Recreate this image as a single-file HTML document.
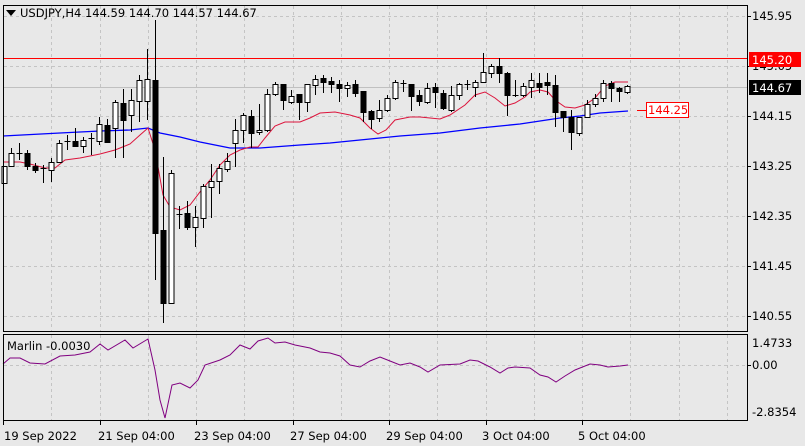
<!DOCTYPE html>
<html><head><meta charset="utf-8"><style>
html,body{margin:0;padding:0;background:#e8e8e8;width:805px;height:446px;overflow:hidden}
svg{display:block;font-family:"DejaVu Sans","Liberation Sans",sans-serif}
</style></head><body>
<svg id="s" width="805" height="446" xmlns="http://www.w3.org/2000/svg" font-size="11.5">
<rect width="805" height="446" fill="#e8e8e8"/>
<g id="grid" stroke="#c4c4c4" stroke-dasharray="3,3" stroke-width="1"></g>
<line x1="3" y1="87.5" x2="748" y2="87.5" stroke="#c0c0c0"/>
<line x1="3" y1="58.5" x2="748" y2="58.5" stroke="#ff0000"/>
<polyline fill="none" stroke="#0000ff" stroke-width="1.3" points="3,136 60,133 100,131 130,130 148,128 160,133 180,137 200,142 220,146 230,148 260,148 300,145 330,143 360,140 380,138 400,136 440,133 480,128 520,124 560,118 580,116 600,113 628,111"/>
<polyline fill="none" stroke="#dc143c" stroke-width="1" points="3,162 20,162 30,164 45,168 55,168 65,160 80,158 100,154 115,150 130,144 140,135 148,128 155,150 163,195 170,207 180,210 190,205 200,192 210,180 220,165 230,155 240,150 250,147 258,147 265,138 275,126 285,122 300,122 310,118 320,113 335,112 350,115 360,118 370,128 378,134 386,130 395,120 410,117 420,117 440,119 450,115 465,105 475,95 485,92 495,98 505,106 515,103 525,97 530,92 540,90 548,92 555,100 565,107 575,108 585,105 595,98 605,86 615,82 628,82"/>
<g id="c"></g>
<polyline fill="none" stroke="#800080" stroke-width="1" points="3,364 10,358 20,358 30,363 45,364 60,356 75,355 90,352 100,344 108,350 125,340 133,348 148,339 155,370 160,400 165,418 172,385 180,383 190,388 198,380 205,365 220,360 230,355 240,345 250,349 258,341 268,338 275,343 285,342 295,345 310,348 320,352 330,353 340,356 350,365 360,367 370,361 380,357 390,361 400,365 410,363 420,367 428,372 440,365 460,364 470,360 478,361 490,367 500,373 508,368 515,367 530,368 540,375 548,377 556,382 565,376 575,370 590,364 600,365 608,367 620,366 628,365"/>
<rect x="3.5" y="5.5" width="744" height="326" fill="none" stroke="#000"/>
<rect x="3.5" y="334.5" width="744" height="86" fill="none" stroke="#000"/>
<polygon points="6,10 16,10 11,16" fill="#000"/>
<text x="20" y="17" fill="#000">USDJPY,H4  144.59 144.70 144.57 144.67</text>
<text x="7" y="350" fill="#000">Marlin -0.0030</text>
<g fill="#000">
<text x="752" y="20">145.95</text><text x="752" y="70">145.05</text>
<text x="752" y="120">144.15</text><text x="752" y="170">143.25</text>
<text x="752" y="220">142.35</text><text x="752" y="270">141.45</text>
<text x="752" y="320">140.55</text>
<text x="752" y="347">1.4733</text><text x="752" y="369">0.00</text><text x="752" y="416">-2.8354</text>
</g>
<g stroke="#000"><line x1="748" y1="16.5" x2="751" y2="16.5"/><line x1="748" y1="66.5" x2="751" y2="66.5"/><line x1="748" y1="116.5" x2="751" y2="116.5"/><line x1="748" y1="166.5" x2="751" y2="166.5"/><line x1="748" y1="216.5" x2="751" y2="216.5"/><line x1="748" y1="266.5" x2="751" y2="266.5"/><line x1="748" y1="316.5" x2="751" y2="316.5"/><line x1="748" y1="365.5" x2="751" y2="365.5"/></g>
<rect x="749" y="52" width="52" height="15" fill="#ff0000"/>
<text x="752" y="64" fill="#fff">145.20</text>
<rect x="749" y="80" width="52" height="15" fill="#000"/>
<text x="752" y="92" fill="#fff">144.67</text>
<line x1="637" y1="110.5" x2="646" y2="110.5" stroke="#ff0000"/>
<rect x="646.5" y="102.5" width="42" height="15" fill="#fff" stroke="#ff0000"/>
<text x="648" y="114" fill="#ff0000">144.25</text>
<g fill="#000">
<text x="4" y="440">19 Sep 2022</text><text x="98" y="440">21 Sep 04:00</text>
<text x="194" y="440">23 Sep 04:00</text><text x="290" y="440">27 Sep 04:00</text>
<text x="386" y="440">29 Sep 04:00</text><text x="482" y="440">3 Oct 04:00</text>
<text x="578" y="440">5 Oct 04:00</text>
</g>
<g stroke="#000"><line x1="3.5" y1="421" x2="3.5" y2="425"/><line x1="100.5" y1="421" x2="100.5" y2="425"/><line x1="196.5" y1="421" x2="196.5" y2="425"/><line x1="293.5" y1="421" x2="293.5" y2="425"/><line x1="389.5" y1="421" x2="389.5" y2="425"/><line x1="486.5" y1="421" x2="486.5" y2="425"/><line x1="582.5" y1="421" x2="582.5" y2="425"/></g>
</svg>
<script>
var NS="http://www.w3.org/2000/svg";
function el(p,t,a){var e=document.createElementNS(NS,t);for(var k in a)e.setAttribute(k,a[k]);p.appendChild(e);return e;}
var g=document.getElementById("grid");
for(var i=0;i<16;i++){var x=Math.round(3+48.25*i)+0.5;if(x<748){el(g,"line",{x1:x,y1:6,x2:x,y2:331});el(g,"line",{x1:x,y1:335,x2:x,y2:420});}}
[16,66,116,166,216,266,316].forEach(function(y){el(g,"line",{x1:4,y1:y+.5,x2:747,y2:y+.5});});
el(g,"line",{x1:4,y1:365.5,x2:747,y2:365.5});
var C=[[4,166,183,166,183,1],[11,153,166,148,166,1],[19,153,153,143,160,1],[27,153,166,150,170,0],[35,166,170,163,173,0],[43,168,168,165,183,1],[51,162,170,158,182,1],[59,143,162,140,160,1],[67,141,141,135,150,1],[75,141,146,128,147,0],[83,140,146,137,153,1],[91,138,138,133,155,1],[99,124,141,117,145,1],[107,125,142,119,143,0],[115,102,128,100,158,1],[123,103,120,89,158,0],[131,100,115,89,132,1],[139,80,101,75,122,1],[147,79,101,49,120,1],[155,80,233,20,280,0],[163,230,303,157,323,0],[171,173,303,170,303,1],[179,214,214,206,229,1],[187,213,227,201,230,0],[195,217,227,206,247,1],[203,186,218,184,228,1],[211,181,187,164,218,1],[219,168,181,164,194,1],[227,161,169,153,172,1],[235,130,143,119,167,1],[243,115,130,113,143,1],[251,116,133,110,148,0],[259,130,132,104,135,1],[267,94,130,89,132,1],[275,84,94,82,96,1],[283,84,100,84,110,0],[291,96,102,90,104,1],[299,94,102,94,120,0],[307,84,102,84,112,1],[315,79,85,75,95,1],[323,78,82,75,93,0],[331,81,84,77,93,0],[339,84,88,80,102,0],[347,85,88,82,97,1],[355,84,93,80,97,0],[363,91,112,91,122,0],[371,111,119,110,129,0],[379,110,118,100,122,1],[387,98,110,95,112,1],[395,82,98,80,100,1],[403,83,83,80,92,1],[411,84,96,84,111,0],[419,95,101,90,106,0],[427,88,102,83,104,1],[435,87,92,83,108,0],[443,93,108,90,110,0],[451,95,110,86,112,1],[459,84,95,83,100,1],[467,84,84,80,90,1],[475,82,87,80,97,1],[483,72,82,53,82,1],[491,66,73,64,78,1],[499,66,73,58,83,0],[507,73,95,72,116,0],[515,95,95,80,97,1],[523,86,95,83,97,1],[531,80,87,73,98,1],[539,83,87,73,93,0],[547,82,85,73,95,0],[555,85,112,75,127,0],[563,111,117,111,132,0],[571,117,132,110,150,0],[579,117,133,117,136,1],[587,104,117,100,118,1],[595,98,104,94,107,1],[603,83,98,80,102,1],[611,83,88,81,102,0],[619,88,91,87,102,0],[627,86,92,85,94,1]];
var cg=document.getElementById("c");
C.forEach(function(c){var x=c[0]+0.5;
el(cg,"line",{x1:x,y1:c[3],x2:x,y2:c[4],stroke:"#000"});
var h=c[2]-c[1];
if(h<1){el(cg,"line",{x1:x-3,y1:c[1]+.5,x2:x+3,y2:c[1]+.5,stroke:"#000"});}
else el(cg,"rect",{x:x-2.5,y:c[1]+.5,width:5,height:h,fill:c[5]?"#fff":"#000",stroke:"#000"});
});
</script>
</body></html>
